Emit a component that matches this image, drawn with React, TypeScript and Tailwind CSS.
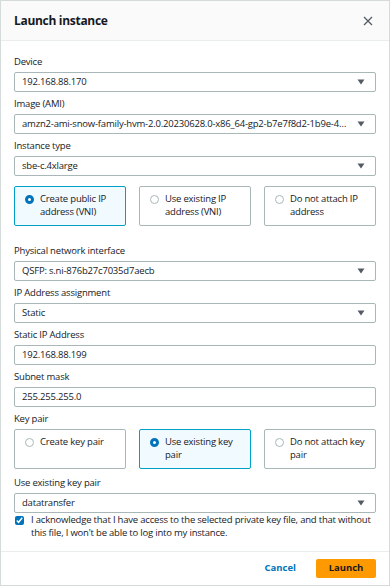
import React, { useState } from "react";

const font = { fontFamily: '"Open Sans", "Noto Sans", sans-serif' };

const Caret = () => (
  <svg width="8" height="6" viewBox="0 0 8 6" className="shrink-0">
    <path d="M0.5 0.5 L7.5 0.5 L4 5.5 Z" fill="#545b64" />
  </svg>
);

const Field = ({ label, children }: { label: string; children: React.ReactNode }) => (
  <div className="flex flex-col">
    <div className="h-[17px] text-[9.5px] tracking-[-0.2px] leading-[14px] text-[#16191f]">{label}</div>
    {children}
  </div>
);

const Select = ({ value }: { value: string }) => (
  <div className="h-[20px] border border-[#aab7b8] rounded-[2px] bg-white flex items-center pl-[7px] pr-[10px] gap-2">
    <span className="flex-1 truncate text-[9.5px] tracking-[-0.2px] text-[#16191f]">{value}</span>
    <Caret />
  </div>
);

const Input = ({ value }: { value: string }) => (
  <div className="h-[20px] border border-[#aab7b8] rounded-[2px] bg-white flex items-center pl-[7px]">
    <span className="text-[9.5px] tracking-[-0.2px] text-[#16191f]">{value}</span>
  </div>
);

const Radio = ({ on }: { on: boolean }) =>
  on ? (
    <span className="w-[9px] h-[9px] rounded-full border-[3px] border-[#0073bb] bg-white shrink-0 mt-[2px]" />
  ) : (
    <span className="w-[9px] h-[9px] rounded-full border border-[#aab7b8] bg-white shrink-0 mt-[2px]" />
  );

const Cards = ({ items, active }: { items: string[]; active: number }) => (
  <div className="grid grid-cols-3 gap-[13px]">
    {items.map((t, i) => (
      <div
        key={t}
        className={`h-[40px] rounded-[2px] border flex gap-[6px] pl-[10px] pr-[8px] pt-[6px] ${
          i === active ? "border-[#00a1c9] bg-[#f1faff]" : "border-[#aab7b8] bg-white"
        }`}
      >
        <Radio on={i === active} />
        <span className="text-[9.5px] tracking-[-0.2px] leading-[12.5px] text-[#16191f]">{t}</span>
      </div>
    ))}
  </div>
);

export default function App() {
  const [ack, setAck] = useState(true);
  return (
    <div style={font} className="w-[390px] h-[586px] bg-white border border-[#d5dbdb] flex flex-col overflow-hidden">
      <div className="h-[40px] shrink-0 bg-[#fafafa] border-b border-[#eaeded] flex items-center justify-between pl-[13px] pr-[16px]">
        <span className="text-[12px] tracking-[-0.3px] font-bold text-[#16191f]">Launch instance</span>
        <svg width="10" height="10" viewBox="0 0 10 10">
          <path d="M1 1 L9 9 M9 1 L1 9" stroke="#545b64" strokeWidth="1.3" />
        </svg>
      </div>

      <div className="flex-1 flex flex-col px-[13px] pt-[14px]">
        <div className="flex flex-col gap-[5px]">
          <Field label="Device">
            <Select value="192.168.88.170" />
          </Field>
          <Field label="Image (AMI)">
            <Select value="amzn2-ami-snow-family-hvm-2.0.20230628.0-x86_64-gp2-b7e7f8d2-1b9e-4774-a5b0-8e1f0d0c0a11" />
          </Field>
          <Field label="Instance type">
            <Select value="sbe-c.4xlarge" />
          </Field>
        </div>

        <div className="mt-[10px]">
          <Cards
            active={0}
            items={["Create public IP address (VNI)", "Use existing IP address (VNI)", "Do not attach IP address"]}
          />
        </div>

        <div className="flex flex-col gap-[5px] mt-[18px]">
          <Field label="Physical network interface">
            <Select value="QSFP: s.ni-876b27c7035d7aecb" />
          </Field>
          <Field label="IP Address assignment">
            <Select value="Static" />
          </Field>
          <Field label="Static IP Address">
            <Input value="192.168.88.199" />
          </Field>
          <Field label="Subnet mask">
            <Input value="255.255.255.0" />
          </Field>
          <Field label="Key pair">
            <Cards active={1} items={["Create key pair", "Use existing key pair", "Do not attach key pair"]} />
          </Field>
        </div>

        <div className="mt-[7px]">
          <Field label="Use existing key pair">
            <Select value="datatransfer" />
          </Field>
        </div>

        <label className="flex gap-[7px] pl-[1px]">
          <input
            type="checkbox"
            checked={ack}
            onChange={() => setAck(!ack)}
            className="w-[9px] h-[9px] mt-[3px] shrink-0 accent-[#0073bb]"
          />
          <span className="text-[9.5px] tracking-[-0.2px] leading-[13px] text-[#16191f]">
            I acknowledge that I have access to the selected private key file, and that without
            <br />
            this file, I won't be able to log into my instance.
          </span>
        </label>
      </div>

      <div className="h-[34px] shrink-0 border-t border-[#eaeded] flex items-center justify-end gap-[20px] pr-[13px]">
        <button className="text-[9.5px] font-bold text-[#0073bb]">Cancel</button>
        <button className="h-[19px] w-[60px] bg-[#ff9900] rounded-[2px] text-[9.5px] font-bold text-[#16191f]">
          Launch
        </button>
      </div>
    </div>
  );
}
